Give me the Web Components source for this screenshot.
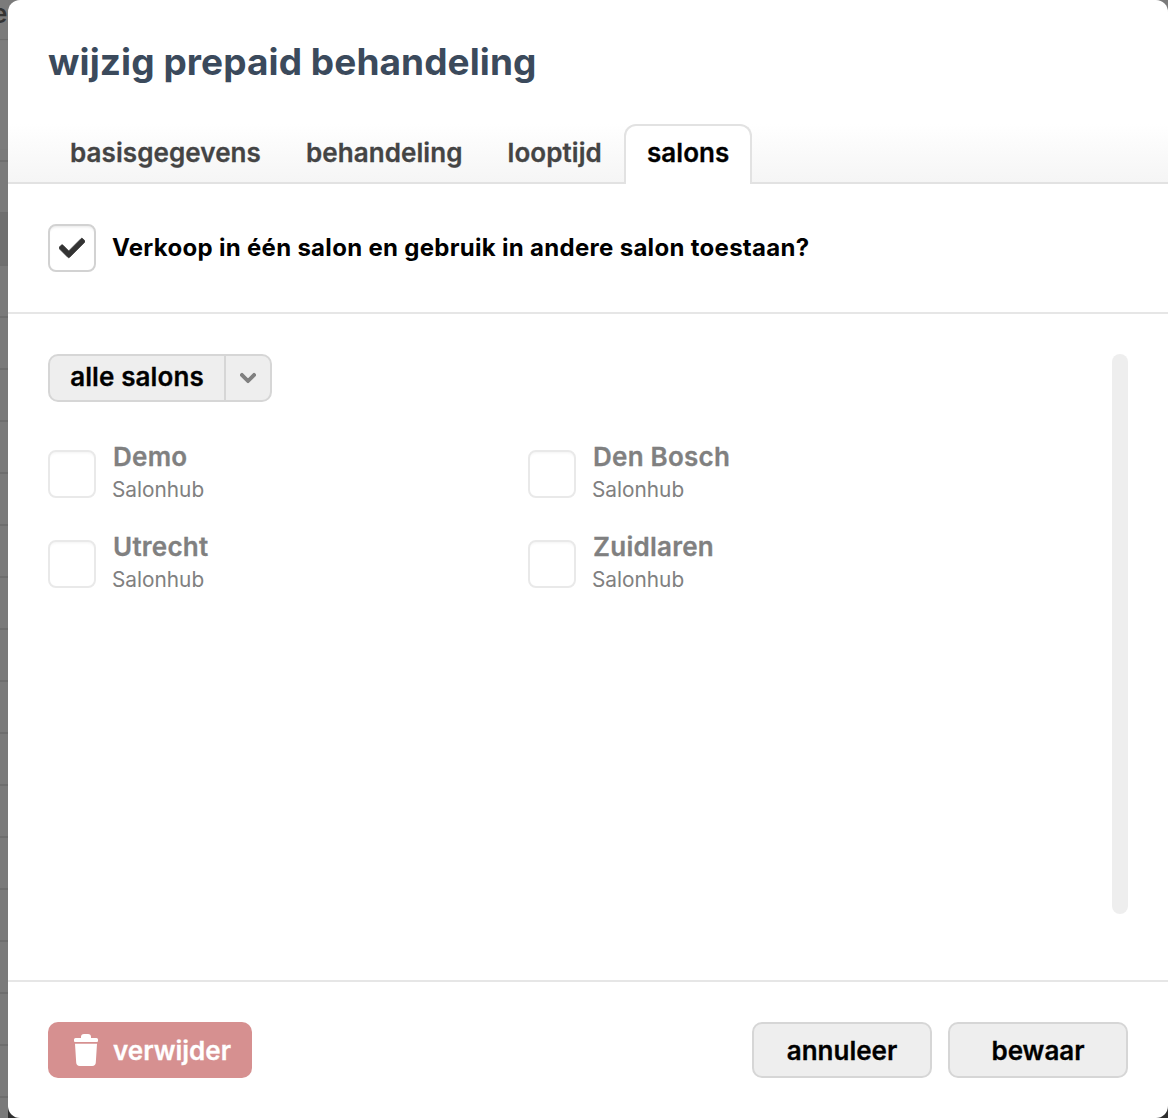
<!DOCTYPE html>
<html lang="nl">
<head>
<meta charset="utf-8">
<title>wijzig prepaid behandeling</title>
<style>
	html, body {
		margin: 0;
		height: 100%;
		background: #7a7a7a;
	}
	body {
		font-family: Inter, "Liberation Sans", sans-serif;
		overflow: hidden;
	}
</style>
</head>
<body>
<modal-page>
	<modal-tabs>
		<modal-tab>basisgegevens</modal-tab>
		<modal-tab>behandeling</modal-tab>
		<modal-tab>looptijd</modal-tab>
		<modal-tab active>salons</modal-tab>
	</modal-tabs>
	<check-row slot="option" checked>Verkoop in één salon en gebruik in andere salon toestaan?</check-row>
	<split-select slot="select">alle salons</split-select>
	<salon-item slot="salons" name="Demo" sub="Salonhub"></salon-item>
	<salon-item slot="salons" name="Den Bosch" sub="Salonhub"></salon-item>
	<salon-item slot="salons" name="Utrecht" sub="Salonhub"></salon-item>
	<salon-item slot="salons" name="Zuidlaren" sub="Salonhub"></salon-item>
	<form-button slot="danger" danger>verwijder</form-button>
	<form-button slot="actions">annuleer</form-button>
	<form-button slot="actions">bewaar</form-button>
</modal-page>

<script>
'use strict';

const CHECK_PATH = 'M173.898 439.404l-166.4-166.4c-9.997-9.997-9.997-26.206 0-36.204l36.203-36.204c9.997-9.998 26.207-9.998 36.204 0L192 312.69 432.095 72.596c9.997-9.997 26.207-9.997 36.204 0l36.203 36.204c9.997 9.997 9.997 26.206 0 36.204l-294.4 294.401c-9.998 9.997-26.207 9.997-36.204-.001z';
const CHEVRON_PATH = 'M207.029 381.476L12.686 187.132c-9.373-9.373-9.373-24.569 0-33.941l22.667-22.667c9.357-9.357 24.522-9.375 33.901-.04L224 284.505l154.745-154.021c9.379-9.335 24.544-9.317 33.901.04l22.667 22.667c9.373 9.373 9.373 24.569 0 33.941L240.971 381.476c-9.373 9.372-24.569 9.372-33.942 0z';

// the table behind the modal, only its left edge shows
window.customElements.define('backdrop-strip', class extends HTMLElement {
	constructor () {
		super();
		let shadowRoot = this.attachShadow({mode: 'open'});
		shadowRoot.innerHTML = `
			<style>
				:host {
					display: block;
					position: relative;
					width: 8px;
					flex: none;
					overflow: hidden;
					background: linear-gradient(to bottom, #7a7a7a 0, #7a7a7a 50px, #6e6e6e 50px, #6e6e6e 52px) 0 6px / 100% 52px;
				}
				.head {
					position: absolute;
					inset: 0 0 auto 0;
					height: 39px;
					background: #7b7b7b;
					border-bottom: 1px solid #6e6e6e;
				}
				.gap {
					display: block;
					position: absolute;
					left: 0;
					top: 41px;
					width: 100%;
					height: 108px;
					background: #7c7c7c;
				}
				.dark {
					display: block;
					position: absolute;
					left: 0;
					top: 213px;
					width: 100%;
					height: 51px;
					background: #6f6f6f;
				}
				span {
					position: absolute;
					left: -8px;
					top: -2px;
					font: 600 26px Inter, sans-serif;
					color: #333;
				}
			</style>
			<i class="gap"></i>
			<i class="dark"></i>
			<div class="head"><span>e</span></div>
		`;
	}
});

window.customElements.define('modal-page', class extends HTMLElement {
	constructor () {
		super();
		let shadowRoot = this.attachShadow({mode: 'open'});
		shadowRoot.innerHTML = `
			<style>
				:host {
					display: flex;
					height: 1118px;
					background: linear-gradient(to bottom, #7a7a7a 50%, #2f2f2f 50%);
				}
				.dialog {
					flex: 1;
					min-width: 0;
					display: flex;
					flex-direction: column;
					background: #fff;
					border-radius: 12px;
				}
				h1 {
					height: 124px;
					box-sizing: border-box;
					margin: 0;
					padding: 40px 40px 0;
					font-size: 37px;
					line-height: 44px;
					font-weight: 700;
					letter-spacing: .08px;
					color: #3b4a5c;
				}
				.option {
					box-sizing: border-box;
					padding: 40px;
					border-bottom: 2px solid #e6e6e6;
					flex: none;
					height: 130px;
				}
				.body {
					flex: 1;
					min-height: 0;
					display: flex;
					gap: 32px;
					padding: 40px 40px 66px 40px;
				}
				.main {
					flex: 1;
					min-width: 0;
				}
				.salons {
					display: grid;
					grid-template-columns: 480px 480px;
					grid-auto-rows: 48px;
					row-gap: 42px;
					margin-top: 48px;
				}
				.track {
					width: 16px;
					flex: none;
					background: #eee;
					border-radius: 8px;
				}
				footer {
					height: 138px;
					box-sizing: border-box;
					flex: none;
					display: flex;
					justify-content: space-between;
					padding: 40px 40px 0 40px;
					border-top: 2px solid #e6e6e6;
				}
				.actions {
					display: flex;
					gap: 16px;
				}
			</style>
			<backdrop-strip></backdrop-strip>
			<section class="dialog">
				<h1>wijzig prepaid behandeling</h1>
				<slot></slot>
				<div class="option"><slot name="option"></slot></div>
				<div class="body">
					<div class="main">
						<slot name="select"></slot>
						<div class="salons"><slot name="salons"></slot></div>
					</div>
					<div class="track"></div>
				</div>
				<footer>
					<slot name="danger"></slot>
					<div class="actions"><slot name="actions"></slot></div>
				</footer>
			</section>
		`;
	}
});

window.customElements.define('modal-tabs', class extends HTMLElement {
	constructor () {
		super();
		let shadowRoot = this.attachShadow({mode: 'open'});
		shadowRoot.innerHTML = `
			<style>
				:host {
					display: flex;
					flex: none;
					height: 60px;
					box-sizing: border-box;
					padding-left: 39.500px;
					background: linear-gradient(to bottom, #fff, #f5f5f5);
					border-bottom: 2px solid #e2e2e2;
				}
			</style>
			<slot></slot>
		`;
	}
});

window.customElements.define('modal-tab', class extends HTMLElement {
	constructor () {
		super();
		let shadowRoot = this.attachShadow({mode: 'open'});
		shadowRoot.innerHTML = `
			<style>
				:host {
					display: block;
					height: 60px;
					box-sizing: border-box;
					padding: 0 20.500px;
					border: 2px solid transparent;
					border-bottom: 0;
					border-radius: 12px 12px 0 0;
					font-size: 26px;
					font-weight: 600;
					line-height: 54px;
					letter-spacing: .08px;
					color: #444;
					-webkit-text-stroke: .3px currentColor;
				}
				:host([active]) {
					background: #fff;
					border-color: #e2e2e2;
					color: #000;
				}
			</style>
			<slot></slot>
		`;
	}
});

window.customElements.define('check-box', class extends HTMLElement {
	constructor () {
		super();
		let shadowRoot = this.attachShadow({mode: 'open'});
		shadowRoot.innerHTML = `
			<style>
				:host {
					display: flex;
					align-items: center;
					justify-content: center;
					flex: none;
					width: 48px;
					height: 48px;
					box-sizing: border-box;
					background: #fff;
					border: 2px solid #d2d2d2;
					border-radius: 8px;
					box-shadow: inset 0 3px 3px -2px rgba(0, 0, 0, .1);
				}
				:host([disabled]) {
					border-color: #e9e9e9;
					box-shadow: inset 0 3px 3px -2px rgba(0, 0, 0, .05);
				}
				svg {
					display: none;
					width: 26px;
					height: 26px;
					fill: #333;
					stroke: #333;
					stroke-width: 14;
				}
				:host([checked]) svg {
					display: block;
				}
			</style>
			<svg viewBox="0 0 512 512" aria-hidden="true"><path d="${CHECK_PATH}"/></svg>
		`;
	}
});

window.customElements.define('check-row', class extends HTMLElement {
	constructor () {
		super();
		let shadowRoot = this.attachShadow({mode: 'open'});
		shadowRoot.innerHTML = `
			<style>
				:host {
					display: flex;
					align-items: center;
					gap: 16px;
					font-size: 24px;
					font-weight: 700;
					letter-spacing: .3px;
					color: #000;
				}
				span {
					padding-bottom: 2px;
				}
			</style>
			<check-box checked></check-box>
			<span><slot></slot></span>
		`;
	}
});

window.customElements.define('salon-item', class extends HTMLElement {
	constructor () {
		super();
		let shadowRoot = this.attachShadow({mode: 'open'});
		shadowRoot.innerHTML = `
			<style>
				:host {
					display: flex;
					gap: 16px;
					height: 48px;
				}
				.text {
					margin-top: -9px;
				}
				.name {
					margin-left: 1px;
					font-size: 26px;
					font-weight: 600;
					line-height: 32px;
					letter-spacing: .25px;
					color: #808080;
					-webkit-text-stroke: .3px currentColor;
				}
				.sub {
					margin-top: 2px;
					font-size: 20.800px;
					line-height: 30px;
					color: #808080;
				}
			</style>
			<check-box disabled></check-box>
			<div class="text">
				<div class="name">${this.getAttribute('name')}</div>
				<div class="sub">${this.getAttribute('sub')}</div>
			</div>
		`;
	}
});

window.customElements.define('split-select', class extends HTMLElement {
	constructor () {
		super();
		let shadowRoot = this.attachShadow({mode: 'open'});
		shadowRoot.innerHTML = `
			<style>
				:host {
					display: flex;
					width: 224px;
					height: 48px;
					box-sizing: border-box;
					background: #eee;
					border: 2px solid #d6d6d6;
					border-radius: 10px;
					font-size: 26px;
					font-weight: 600;
					letter-spacing: .1px;
					color: #000;
					-webkit-text-stroke: .3px currentColor;
				}
				.label {
					width: 176px;
					box-sizing: border-box;
					padding-top: 1px;
					line-height: 40px;
					text-align: center;
					white-space: nowrap;
					border-right: 2px solid #d6d6d6;
				}
				.arrow {
					flex: 1;
					display: flex;
					align-items: center;
					justify-content: center;
				}
				svg {
					width: 16px;
					height: 18px;
					fill: #808080;
					stroke: #808080;
					stroke-width: 30;
				}
			</style>
			<div class="label"><slot></slot></div>
			<div class="arrow"><svg viewBox="0 0 448 512" aria-hidden="true"><path d="${CHEVRON_PATH}"/></svg></div>
		`;
	}
});

window.customElements.define('form-button', class extends HTMLElement {
	constructor () {
		super();
		let shadowRoot = this.attachShadow({mode: 'open'});
		shadowRoot.innerHTML = `
			<style>
				:host {
					display: flex;
					align-items: center;
					justify-content: center;
					width: 180px;
					height: 56px;
					box-sizing: border-box;
					background: #eee;
					border: 2px solid #d6d6d6;
					border-radius: 10px;
					font-size: 26px;
					font-weight: 600;
					color: #000;
					-webkit-text-stroke: .3px currentColor;
				}
				:host([danger]) {
					width: 204px;
					justify-content: flex-start;
					padding-left: 26px;
					gap: 15px;
					background: #d69090;
					border: 0;
					color: #fff;
				}
				svg {
					display: none;
					width: 24px;
					height: 32px;
					fill: #fff;
				}
				:host([danger]) svg {
					display: block;
				}
			</style>
			<svg viewBox="0 0 24 32" aria-hidden="true"><path d="M7 4V3a3 3 0 0 1 3-3h4a3 3 0 0 1 3 3v1h5.500A1.500 1.500 0 0 1 24 5.500V7a1 1 0 0 1-1 1H1a1 1 0 0 1-1-1V5.500A1.500 1.500 0 0 1 1.500 4zM1 9.800h22l-1.200 18.800A3.600 3.600 0 0 1 18.200 32H5.800a3.600 3.600 0 0 1-3.600-3.400z"/></svg>
			<span><slot></slot></span>
		`;
	}
});
</script>
</body>
</html>
